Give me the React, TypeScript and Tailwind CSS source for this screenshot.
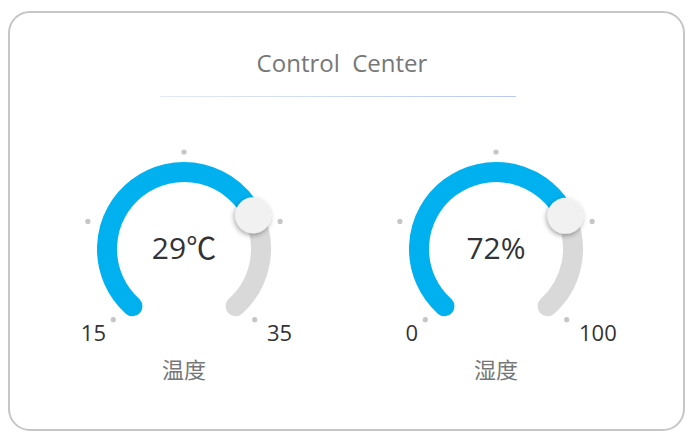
import React from "react";

const CX = 120;
const CY = 105;
const R = 77;

function polar(angle: number, r: number) {
  const rad = (angle * Math.PI) / 180;
  return [CX + r * Math.sin(rad), CY - r * Math.cos(rad)];
}

function arc(a1: number, a2: number, r: number) {
  const [x1, y1] = polar(a1, r);
  const [x2, y2] = polar(a2, r);
  const large = a2 - a1 > 180 ? 1 : 0;
  return `M ${x1} ${y1} A ${r} ${r} 0 ${large} 1 ${x2} ${y2}`;
}

const dots = [
  { a: -135, r: 100 },
  { a: -74, r: 100 },
  { a: 0, r: 97 },
  { a: 74, r: 100 },
  { a: 135, r: 100 },
];

type GaugeProps = {
  id: string;
  value: string;
  min: string;
  max: string;
  label: string;
  knob: number;
};

function Gauge({ id, value, min, max, label, knob }: GaugeProps) {
  const [kx, ky] = polar(knob, R);
  return (
    <div className="flex w-[240px] flex-col items-center">
      <div className="relative h-[200px] w-[240px]">
        <svg width="240" height="200" viewBox="0 0 240 200">
          <defs>
            <filter id={`sh-${id}`} x="-50%" y="-50%" width="200%" height="200%">
              <feDropShadow dx="-1" dy="2" stdDeviation="2.5" floodColor="#000" floodOpacity="0.35" />
            </filter>
          </defs>
          {dots.map((d) => {
            const [x, y] = polar(d.a, d.r);
            return <circle key={d.a} cx={x} cy={y} r="2.6" fill="#c6c6c6" />;
          })}
          <path d={arc(knob, 138, R)} stroke="#d9d9d9" strokeWidth="20" fill="none" strokeLinecap="round" />
          <path d={arc(-138, knob, R)} stroke="#00b0ef" strokeWidth="20" fill="none" strokeLinecap="round" />
          <circle cx={kx} cy={ky} r="18" fill="#f1f1f1" filter={`url(#sh-${id})`} />
        </svg>
        <span className="absolute left-0 right-0 top-[89px] text-center text-[30px] leading-none text-[#333]">
          {value}
        </span>
        <span className="absolute right-[198px] top-[177px] text-[22px] leading-none text-[#333]">{min}</span>
        <span className="absolute left-[203px] top-[177px] text-[22px] leading-none text-[#333]">{max}</span>
      </div>
      <div className="mt-[14px] text-[22px] leading-none text-[#777]">{label}</div>
    </div>
  );
}

export default function App() {
  return (
    <div
      className="min-h-[443px] bg-white pl-[8px] pt-[11px]"
      style={{ fontFamily: '"Open Sans", "Noto Sans CJK SC", sans-serif' }}
    >
      <div className="flex h-[420px] w-[677px] flex-col items-center rounded-[22px] border-2 border-[#c6c6c6] pr-[12px]">
        <div className="mt-[35px] ml-[3px] whitespace-pre text-[24px] leading-[30px] text-[#777]">Control  Center</div>
        <div className="mt-[18px] mr-[6px] h-px w-[356px] bg-gradient-to-r from-[#e3e9f6] to-[#b9c9ef]" />
        <div className="mt-[47px] mr-[1px] flex gap-[72px]">
          <Gauge id="t" value="29℃" min="15" max="35" label="温度" knob={64} />
          <Gauge id="h" value="72%" min="0" max="100" label="湿度" knob={64.5} />
        </div>
      </div>
    </div>
  );
}
